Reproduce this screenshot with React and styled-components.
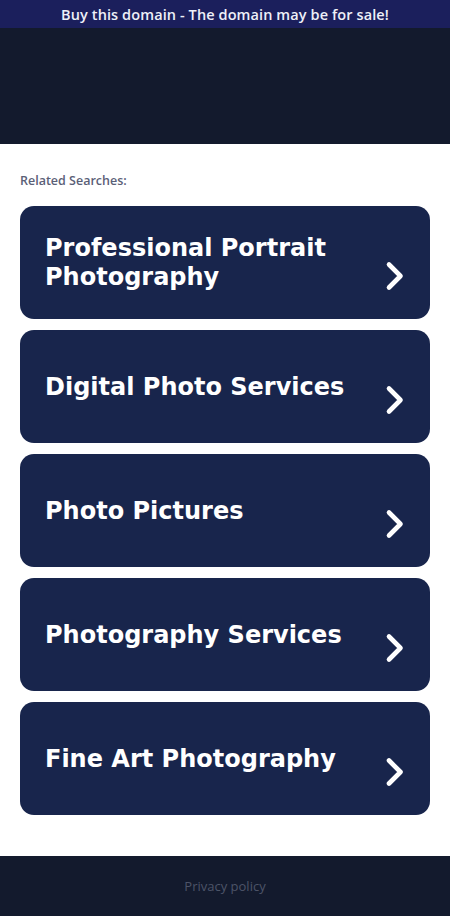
import React from 'react';
import styled, { createGlobalStyle } from 'styled-components';

const GlobalStyle = createGlobalStyle`
  html, body {
    margin: 0;
    padding: 0;
    background: #ffffff;
  }
  * {
    box-sizing: border-box;
  }
`;

const Page = styled.div`
  display: flex;
  flex-direction: column;
  min-height: 916px;
`;

const SaleBar = styled.a`
  display: flex;
  align-items: center;
  justify-content: center;
  height: 28px;
  background: #1b1f5c;
  color: #eef0f8;
  font-family: 'Open Sans', 'Liberation Sans', sans-serif;
  font-size: 14.5px;
  font-weight: 600;
  text-decoration: none;
  letter-spacing: 0.1px;
`;

const Header = styled.div`
  height: 116px;
  background: #131a2d;
`;

const Main = styled.main`
  flex: 1;
  padding: 29px 20px 41px;
`;

const Label = styled.div`
  font-family: 'Open Sans', 'Liberation Sans', sans-serif;
  font-size: 12.5px;
  font-weight: 600;
  color: #5b6077;
  line-height: 16px;
  margin-bottom: 17px;
`;

const List = styled.div`
  display: flex;
  flex-direction: column;
  gap: 11px;
`;

const Card = styled.a`
  display: flex;
  align-items: center;
  justify-content: space-between;
  min-height: 113px;
  padding: 1px 25px 0 25px;
  background: #18254c;
  border-radius: 14px;
  text-decoration: none;
`;

const Title = styled.span`
  font-family: 'DejaVu Sans', 'Liberation Sans', sans-serif;
  font-weight: bold;
  font-size: 24px;
  line-height: 29px;
  color: #ffffff;
  padding-right: 30px;
`;

const Chevron = styled.svg`
  flex: none;
  margin-top: 26px;
`;

const Footer = styled.footer`
  display: flex;
  align-items: center;
  justify-content: center;
  height: 60px;
  background: #131a2d;
`;

const FooterLink = styled.a`
  font-family: 'Open Sans', 'Liberation Sans', sans-serif;
  font-size: 13px;
  color: #4d5468;
  text-decoration: none;
`;

const searches = [
  'Professional Portrait Photography',
  'Digital Photo Services',
  'Photo Pictures',
  'Photography Services',
  'Fine Art Photography',
];

const Arrow = () => (
  <Chevron width="20" height="30" viewBox="0 0 20 30">
    <path
      d="M4 3.5 L15.5 15 L4 26.5"
      fill="none"
      stroke="#ffffff"
      strokeWidth="4.6"
      strokeLinecap="round"
      strokeLinejoin="round"
    />
  </Chevron>
);

export default function App() {
  return (
    <>
      <GlobalStyle />
      <Page>
        <SaleBar href="#">Buy this domain - The domain may be for sale!</SaleBar>
        <Header />
        <Main>
          <Label>Related Searches:</Label>
          <List>
            {searches.map((s) => (
              <Card href="#" key={s}>
                <Title>{s}</Title>
                <Arrow />
              </Card>
            ))}
          </List>
        </Main>
        <Footer>
          <FooterLink href="#">Privacy policy</FooterLink>
        </Footer>
      </Page>
    </>
  );
}
